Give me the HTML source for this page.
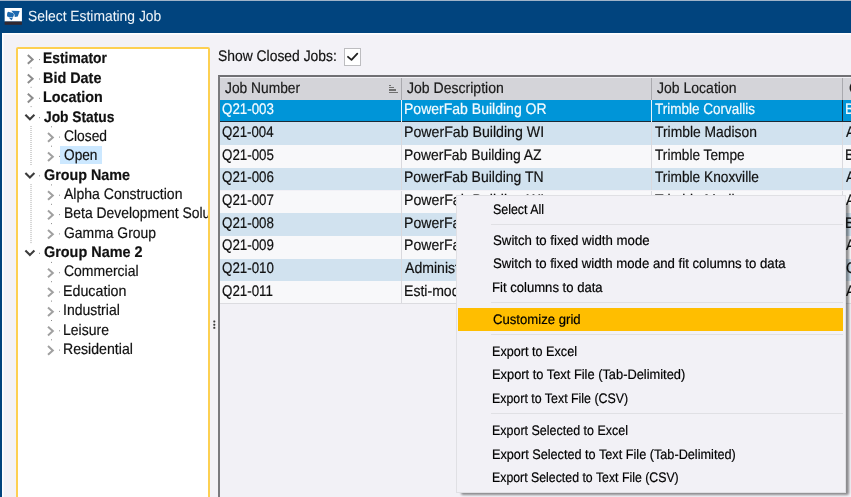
<!DOCTYPE html>
<html><head><meta charset="utf-8"><style>
html,body{margin:0;padding:0;width:851px;height:497px;overflow:hidden;background:#f3f2f7;font-family:'Liberation Sans', sans-serif}
</style></head><body>
<div style="position:absolute;left:0;top:0;width:851px;height:33px;background:#01447e"></div>
<div style="position:absolute;left:0;top:0;width:851px;height:1px;background:#9fb3c8"></div>
<div style="position:absolute;left:0;top:33px;width:2px;height:464px;background:#01447e"></div>
<div style="position:absolute;left:2px;top:33px;width:849px;height:2px;background:#f9f9fc;border-top:1px solid #fff;box-sizing:border-box"></div>
<div style="position:absolute;left:2px;top:33px;width:2px;height:464px;background:#f9f9fc;border-left:1px solid #fff;box-sizing:border-box"></div>
<svg style="position:absolute;left:2px;top:6px" width="22" height="22" viewBox="0 0 497 497">
<rect x="60" y="45" width="390" height="305" fill="#ffffff"/>
<rect x="60" y="352" width="390" height="72" fill="#33282f"/>
<path d="M138 128 L248 158 L272 200 L246 262 L150 250 L112 232 L118 160 Z" fill="#1d6ab0"/>
<path d="M148 262 L246 274 L216 324 Z" fill="#1d6ab0"/>
<path d="M212 110 L400 114 L356 240 L288 246 L282 192 Z" fill="#1d6ab0"/>
</svg>
<div style="position:absolute;white-space:nowrap;left:218.00px;top:47px;font:normal 15.3px/20px 'Liberation Sans', sans-serif;color:#111;-webkit-text-stroke:0.2px #111;transform:scaleX(0.9075);transform-origin:0 0;text-rendering:geometricPrecision;">Show Closed Jobs:</div><div style="position:absolute;white-space:nowrap;left:27.60px;top:7px;font:normal 14.8px/20px 'Liberation Sans', sans-serif;color:#eef3f8;-webkit-text-stroke:0.2px #eef3f8;transform:scaleX(0.9363);transform-origin:0 0;text-rendering:geometricPrecision;-webkit-text-stroke:0.05px #eef3f8">Select Estimating Job</div>
<div style="position:absolute;left:16px;top:47px;width:194px;height:460px;border:2px solid #fdd052;border-radius:2px;background:#fff;box-sizing:border-box"></div>
<div style="position:absolute;left:18px;top:49px;width:190px;height:448px;overflow:hidden">
<div style="position:absolute;left:-18px;top:-49px;width:851px;height:497px">
<div style="position:absolute;left:59.80px;top:145.60px;width:41.90px;height:18.60px;background:#cce8ff;"></div><div style="position:absolute;white-space:nowrap;left:42.79px;top:49px;font:bold 15.3px/20px 'Liberation Sans', sans-serif;color:#111;-webkit-text-stroke:0.2px #111;transform:scaleX(0.9052);transform-origin:0 0;text-rendering:geometricPrecision;">Estimator</div><div style="position:absolute;white-space:nowrap;left:42.76px;top:69px;font:bold 15.3px/20px 'Liberation Sans', sans-serif;color:#111;-webkit-text-stroke:0.2px #111;transform:scaleX(0.9415);transform-origin:0 0;text-rendering:geometricPrecision;">Bid Date</div><div style="position:absolute;white-space:nowrap;left:42.76px;top:88px;font:bold 15.3px/20px 'Liberation Sans', sans-serif;color:#111;-webkit-text-stroke:0.2px #111;transform:scaleX(0.9360);transform-origin:0 0;text-rendering:geometricPrecision;">Location</div><div style="position:absolute;white-space:nowrap;left:43.70px;top:108px;font:bold 15.3px/20px 'Liberation Sans', sans-serif;color:#111;-webkit-text-stroke:0.2px #111;transform:scaleX(0.9010);transform-origin:0 0;text-rendering:geometricPrecision;">Job Status</div><div style="position:absolute;white-space:nowrap;left:64.40px;top:127px;font:normal 15.3px/20px 'Liberation Sans', sans-serif;color:#111;-webkit-text-stroke:0.2px #111;transform:scaleX(0.9043);transform-origin:0 0;text-rendering:geometricPrecision;">Closed</div><div style="position:absolute;white-space:nowrap;left:64.40px;top:146px;font:normal 15.3px/20px 'Liberation Sans', sans-serif;color:#111;-webkit-text-stroke:0.2px #111;transform:scaleX(0.8940);transform-origin:0 0;text-rendering:geometricPrecision;">Open</div><div style="position:absolute;white-space:nowrap;left:43.70px;top:166px;font:bold 15.3px/20px 'Liberation Sans', sans-serif;color:#111;-webkit-text-stroke:0.2px #111;transform:scaleX(0.9355);transform-origin:0 0;text-rendering:geometricPrecision;">Group Name</div><div style="position:absolute;white-space:nowrap;left:64.40px;top:185px;font:normal 15.3px/20px 'Liberation Sans', sans-serif;color:#111;-webkit-text-stroke:0.2px #111;transform:scaleX(0.9166);transform-origin:0 0;text-rendering:geometricPrecision;">Alpha Construction</div><div style="position:absolute;white-space:nowrap;left:64.29px;top:204px;font:normal 15.3px/20px 'Liberation Sans', sans-serif;color:#111;-webkit-text-stroke:0.2px #111;transform:scaleX(0.9100);transform-origin:0 0;text-rendering:geometricPrecision;">Beta Development Solutions</div><div style="position:absolute;white-space:nowrap;left:64.40px;top:224px;font:normal 15.3px/20px 'Liberation Sans', sans-serif;color:#111;-webkit-text-stroke:0.2px #111;transform:scaleX(0.9100);transform-origin:0 0;text-rendering:geometricPrecision;">Gamma Group</div><div style="position:absolute;white-space:nowrap;left:43.70px;top:243px;font:bold 15.3px/20px 'Liberation Sans', sans-serif;color:#111;-webkit-text-stroke:0.2px #111;transform:scaleX(0.9419);transform-origin:0 0;text-rendering:geometricPrecision;">Group Name 2</div><div style="position:absolute;white-space:nowrap;left:64.40px;top:262px;font:normal 15.3px/20px 'Liberation Sans', sans-serif;color:#111;-webkit-text-stroke:0.2px #111;transform:scaleX(0.9139);transform-origin:0 0;text-rendering:geometricPrecision;">Commercial</div><div style="position:absolute;white-space:nowrap;left:63.47px;top:282px;font:normal 15.3px/20px 'Liberation Sans', sans-serif;color:#111;-webkit-text-stroke:0.2px #111;transform:scaleX(0.9319);transform-origin:0 0;text-rendering:geometricPrecision;">Education</div><div style="position:absolute;white-space:nowrap;left:63.49px;top:301px;font:normal 15.3px/20px 'Liberation Sans', sans-serif;color:#111;-webkit-text-stroke:0.2px #111;transform:scaleX(0.9148);transform-origin:0 0;text-rendering:geometricPrecision;">Industrial</div><div style="position:absolute;white-space:nowrap;left:63.48px;top:321px;font:normal 15.3px/20px 'Liberation Sans', sans-serif;color:#111;-webkit-text-stroke:0.2px #111;transform:scaleX(0.9165);transform-origin:0 0;text-rendering:geometricPrecision;">Leisure</div><div style="position:absolute;white-space:nowrap;left:63.48px;top:340px;font:normal 15.3px/20px 'Liberation Sans', sans-serif;color:#111;-webkit-text-stroke:0.2px #111;transform:scaleX(0.9235);transform-origin:0 0;text-rendering:geometricPrecision;">Residential</div>
<svg style="position:absolute;left:0;top:0" width="851" height="497"><path d="M27.8 55.1 L32.6 59.4 L27.8 63.7" fill="none" stroke="#8c8c8c" stroke-width="2"/><rect x="39.0" y="59.1" width="1" height="1" fill="#8a8a8a"/><rect x="30.6" y="67.4" width="1" height="1" fill="#9a9a9a"/><path d="M27.8 74.5 L32.6 78.8 L27.8 83.1" fill="none" stroke="#8c8c8c" stroke-width="2"/><rect x="39.0" y="78.5" width="1" height="1" fill="#8a8a8a"/><rect x="30.6" y="86.8" width="1" height="1" fill="#9a9a9a"/><path d="M27.8 93.8 L32.6 98.1 L27.8 102.4" fill="none" stroke="#8c8c8c" stroke-width="2"/><rect x="39.0" y="97.8" width="1" height="1" fill="#8a8a8a"/><rect x="30.6" y="106.1" width="1" height="1" fill="#9a9a9a"/><path d="M25.4 114.8 L29.9 119.3 L34.4 114.8" fill="none" stroke="#3c3c3c" stroke-width="2.1"/><rect x="39.0" y="117.2" width="1" height="1" fill="#8a8a8a"/><path d="M48.0 133.1 L52.8 137.4 L48.0 141.7" fill="none" stroke="#a0a0a0" stroke-width="2"/><rect x="59.0" y="136.6" width="1" height="1" fill="#8a8a8a"/><rect x="51" y="126.3" width="1" height="1" fill="#8a8a8a"/><path d="M48.0 152.4 L52.8 156.8 L48.0 161.1" fill="none" stroke="#a0a0a0" stroke-width="2"/><rect x="59.0" y="155.9" width="1" height="1" fill="#8a8a8a"/><rect x="51" y="145.7" width="1" height="1" fill="#8a8a8a"/><path d="M25.4 172.9 L29.9 177.4 L34.4 172.9" fill="none" stroke="#3c3c3c" stroke-width="2.1"/><rect x="39.0" y="175.3" width="1" height="1" fill="#8a8a8a"/><path d="M48.0 191.2 L52.8 195.5 L48.0 199.8" fill="none" stroke="#a0a0a0" stroke-width="2"/><rect x="59.0" y="194.7" width="1" height="1" fill="#8a8a8a"/><rect x="51" y="184.4" width="1" height="1" fill="#8a8a8a"/><path d="M48.0 210.6 L52.8 214.9 L48.0 219.2" fill="none" stroke="#a0a0a0" stroke-width="2"/><rect x="59.0" y="214.1" width="1" height="1" fill="#8a8a8a"/><rect x="51" y="203.8" width="1" height="1" fill="#8a8a8a"/><path d="M48.0 229.9 L52.8 234.2 L48.0 238.5" fill="none" stroke="#a0a0a0" stroke-width="2"/><rect x="59.0" y="233.4" width="1" height="1" fill="#8a8a8a"/><rect x="51" y="223.1" width="1" height="1" fill="#8a8a8a"/><path d="M25.4 250.4 L29.9 254.9 L34.4 250.4" fill="none" stroke="#3c3c3c" stroke-width="2.1"/><rect x="39.0" y="252.8" width="1" height="1" fill="#8a8a8a"/><path d="M48.0 268.7 L52.8 273.0 L48.0 277.3" fill="none" stroke="#a0a0a0" stroke-width="2"/><rect x="59.0" y="272.2" width="1" height="1" fill="#8a8a8a"/><rect x="51" y="261.9" width="1" height="1" fill="#8a8a8a"/><path d="M48.0 288.0 L52.8 292.3 L48.0 296.6" fill="none" stroke="#a0a0a0" stroke-width="2"/><rect x="59.0" y="291.5" width="1" height="1" fill="#8a8a8a"/><rect x="51" y="281.2" width="1" height="1" fill="#8a8a8a"/><path d="M48.0 307.4 L52.8 311.7 L48.0 316.0" fill="none" stroke="#a0a0a0" stroke-width="2"/><rect x="59.0" y="310.9" width="1" height="1" fill="#8a8a8a"/><rect x="51" y="300.6" width="1" height="1" fill="#8a8a8a"/><path d="M48.0 326.8 L52.8 331.1 L48.0 335.4" fill="none" stroke="#a0a0a0" stroke-width="2"/><rect x="59.0" y="330.3" width="1" height="1" fill="#8a8a8a"/><rect x="51" y="320.0" width="1" height="1" fill="#8a8a8a"/><path d="M48.0 346.1 L52.8 350.4 L48.0 354.8" fill="none" stroke="#a0a0a0" stroke-width="2"/><rect x="59.0" y="349.6" width="1" height="1" fill="#8a8a8a"/><rect x="51" y="339.3" width="1" height="1" fill="#8a8a8a"/><line x1="31" y1="126.0" x2="31" y2="165.9" stroke="#a8a8a8" stroke-width="1" stroke-dasharray="1 1"/><line x1="31" y1="184.1" x2="31" y2="243.4" stroke="#a8a8a8" stroke-width="1" stroke-dasharray="1 1"/></svg>
</div></div>
<div style="position:absolute;left:344px;top:48.4px;width:17px;height:17.2px;border:1px solid #bdbdc0;background:#fff;box-sizing:border-box"></div>
<svg style="position:absolute;left:0;top:0" width="851" height="497"><path d="M348 56.8 L351.5 59.9 L357.3 53.6" fill="none" stroke="#222" stroke-width="1.8" stroke-linecap="round" stroke-linejoin="round"/></svg>
<div style="position:absolute;left:0;top:0;width:851px;height:497px;overflow:hidden">
<div style="position:absolute;left:218.00px;top:75.00px;width:700.00px;height:500.00px;background:#f2f1f6;border-left:2px solid #7a7a7e;border-top:2.5px solid #707074;box-sizing:border-box"></div><div style="position:absolute;left:220.00px;top:77.50px;width:700.00px;height:22.20px;background:#d4d4d9;"></div><div style="position:absolute;left:401.00px;top:77.50px;width:1.00px;height:22.20px;background:#a9a9ae;"></div><div style="position:absolute;left:651.00px;top:77.50px;width:1.00px;height:22.20px;background:#a9a9ae;"></div><div style="position:absolute;left:841.80px;top:77.50px;width:1.00px;height:22.20px;background:#a9a9ae;"></div><div style="position:absolute;left:220.00px;top:99.70px;width:700.00px;height:22.70px;background:#0095d8;"></div><div style="position:absolute;left:220.00px;top:120.50px;width:700.00px;height:1.90px;background:#1b2a36;"></div><div style="position:absolute;left:401.00px;top:99.70px;width:1.00px;height:22.70px;background:#e6f3fb;"></div><div style="position:absolute;left:651.00px;top:99.70px;width:1.00px;height:22.70px;background:#e6f3fb;"></div><div style="position:absolute;left:841.80px;top:99.70px;width:1.00px;height:22.70px;background:#1b2a36;"></div><div style="position:absolute;left:220.00px;top:122.40px;width:700.00px;height:22.70px;background:#d1e2ef;"></div><div style="position:absolute;left:401.00px;top:122.40px;width:1.00px;height:22.70px;background:#d9d9de;"></div><div style="position:absolute;left:651.00px;top:122.40px;width:1.00px;height:22.70px;background:#d9d9de;"></div><div style="position:absolute;left:841.80px;top:122.40px;width:1.00px;height:22.70px;background:#d9d9de;"></div><div style="position:absolute;left:220.00px;top:145.10px;width:700.00px;height:22.70px;background:#f8f8fa;"></div><div style="position:absolute;left:401.00px;top:145.10px;width:1.00px;height:22.70px;background:#d9d9de;"></div><div style="position:absolute;left:651.00px;top:145.10px;width:1.00px;height:22.70px;background:#d9d9de;"></div><div style="position:absolute;left:841.80px;top:145.10px;width:1.00px;height:22.70px;background:#d9d9de;"></div><div style="position:absolute;left:220.00px;top:167.80px;width:700.00px;height:22.70px;background:#d1e2ef;"></div><div style="position:absolute;left:401.00px;top:167.80px;width:1.00px;height:22.70px;background:#d9d9de;"></div><div style="position:absolute;left:651.00px;top:167.80px;width:1.00px;height:22.70px;background:#d9d9de;"></div><div style="position:absolute;left:841.80px;top:167.80px;width:1.00px;height:22.70px;background:#d9d9de;"></div><div style="position:absolute;left:220.00px;top:190.50px;width:700.00px;height:22.70px;background:#f8f8fa;"></div><div style="position:absolute;left:401.00px;top:190.50px;width:1.00px;height:22.70px;background:#d9d9de;"></div><div style="position:absolute;left:651.00px;top:190.50px;width:1.00px;height:22.70px;background:#d9d9de;"></div><div style="position:absolute;left:841.80px;top:190.50px;width:1.00px;height:22.70px;background:#d9d9de;"></div><div style="position:absolute;left:220.00px;top:213.20px;width:700.00px;height:22.70px;background:#d1e2ef;"></div><div style="position:absolute;left:401.00px;top:213.20px;width:1.00px;height:22.70px;background:#d9d9de;"></div><div style="position:absolute;left:651.00px;top:213.20px;width:1.00px;height:22.70px;background:#d9d9de;"></div><div style="position:absolute;left:841.80px;top:213.20px;width:1.00px;height:22.70px;background:#d9d9de;"></div><div style="position:absolute;left:220.00px;top:235.90px;width:700.00px;height:22.70px;background:#f8f8fa;"></div><div style="position:absolute;left:401.00px;top:235.90px;width:1.00px;height:22.70px;background:#d9d9de;"></div><div style="position:absolute;left:651.00px;top:235.90px;width:1.00px;height:22.70px;background:#d9d9de;"></div><div style="position:absolute;left:841.80px;top:235.90px;width:1.00px;height:22.70px;background:#d9d9de;"></div><div style="position:absolute;left:220.00px;top:258.60px;width:700.00px;height:22.70px;background:#d1e2ef;"></div><div style="position:absolute;left:401.00px;top:258.60px;width:1.00px;height:22.70px;background:#d9d9de;"></div><div style="position:absolute;left:651.00px;top:258.60px;width:1.00px;height:22.70px;background:#d9d9de;"></div><div style="position:absolute;left:841.80px;top:258.60px;width:1.00px;height:22.70px;background:#d9d9de;"></div><div style="position:absolute;left:220.00px;top:281.30px;width:700.00px;height:22.70px;background:#f8f8fa;"></div><div style="position:absolute;left:401.00px;top:281.30px;width:1.00px;height:22.70px;background:#d9d9de;"></div><div style="position:absolute;left:651.00px;top:281.30px;width:1.00px;height:22.70px;background:#d9d9de;"></div><div style="position:absolute;left:841.80px;top:281.30px;width:1.00px;height:22.70px;background:#d9d9de;"></div><div style="position:absolute;left:220.00px;top:303.00px;width:700.00px;height:1.00px;background:#dcdce0;"></div><div style="position:absolute;left:389.10px;top:85.00px;width:2.00px;height:1.30px;background:#707070;"></div><div style="position:absolute;left:389.10px;top:87.20px;width:4.70px;height:1.30px;background:#707070;"></div><div style="position:absolute;left:389.10px;top:89.40px;width:6.90px;height:1.30px;background:#707070;"></div><div style="position:absolute;left:389.10px;top:91.60px;width:9.00px;height:1.30px;background:#707070;"></div><div style="position:absolute;white-space:nowrap;left:224.50px;top:79px;font:normal 15.3px/20px 'Liberation Sans', sans-serif;color:#1a1a1a;-webkit-text-stroke:0.2px #1a1a1a;transform:scaleX(0.9012);transform-origin:0 0;text-rendering:geometricPrecision;">Job Number</div><div style="position:absolute;white-space:nowrap;left:407.20px;top:79px;font:normal 15.3px/20px 'Liberation Sans', sans-serif;color:#1a1a1a;-webkit-text-stroke:0.2px #1a1a1a;transform:scaleX(0.9178);transform-origin:0 0;text-rendering:geometricPrecision;">Job Description</div><div style="position:absolute;white-space:nowrap;left:657.10px;top:79px;font:normal 15.3px/20px 'Liberation Sans', sans-serif;color:#1a1a1a;-webkit-text-stroke:0.2px #1a1a1a;transform:scaleX(0.9161);transform-origin:0 0;text-rendering:geometricPrecision;">Job Location</div><div style="position:absolute;white-space:nowrap;left:849.00px;top:79px;font:normal 15.3px/20px 'Liberation Sans', sans-serif;color:#1a1a1a;-webkit-text-stroke:0.2px #1a1a1a;transform:scaleX(0.9000);transform-origin:0 0;text-rendering:geometricPrecision;">Customer</div><div style="position:absolute;white-space:nowrap;left:222.00px;top:100px;font:normal 15.3px/20px 'Liberation Sans', sans-serif;color:#f4fbff;-webkit-text-stroke:0.2px #f4fbff;transform:scaleX(0.8730);transform-origin:0 0;text-rendering:geometricPrecision;">Q21-003</div><div style="position:absolute;white-space:nowrap;left:403.78px;top:100px;font:normal 15.3px/20px 'Liberation Sans', sans-serif;color:#f4fbff;-webkit-text-stroke:0.2px #f4fbff;transform:scaleX(0.9169);transform-origin:0 0;text-rendering:geometricPrecision;">PowerFab Building OR</div><div style="position:absolute;white-space:nowrap;left:655.10px;top:100px;font:normal 15.3px/20px 'Liberation Sans', sans-serif;color:#f4fbff;-webkit-text-stroke:0.2px #f4fbff;transform:scaleX(0.8823);transform-origin:0 0;text-rendering:geometricPrecision;">Trimble Corvallis</div><div style="position:absolute;white-space:nowrap;left:844.90px;top:100px;font:normal 15.3px/20px 'Liberation Sans', sans-serif;color:#f4fbff;-webkit-text-stroke:0.2px #f4fbff;transform:scaleX(0.9000);transform-origin:0 0;text-rendering:geometricPrecision;">B</div><div style="position:absolute;white-space:nowrap;left:222.00px;top:123px;font:normal 15.3px/20px 'Liberation Sans', sans-serif;color:#111;-webkit-text-stroke:0.2px #111;transform:scaleX(0.8663);transform-origin:0 0;text-rendering:geometricPrecision;">Q21-004</div><div style="position:absolute;white-space:nowrap;left:403.77px;top:123px;font:normal 15.3px/20px 'Liberation Sans', sans-serif;color:#111;-webkit-text-stroke:0.2px #111;transform:scaleX(0.9257);transform-origin:0 0;text-rendering:geometricPrecision;">PowerFab Building WI</div><div style="position:absolute;white-space:nowrap;left:655.10px;top:123px;font:normal 15.3px/20px 'Liberation Sans', sans-serif;color:#111;-webkit-text-stroke:0.2px #111;transform:scaleX(0.9064);transform-origin:0 0;text-rendering:geometricPrecision;">Trimble Madison</div><div style="position:absolute;white-space:nowrap;left:845.80px;top:123px;font:normal 15.3px/20px 'Liberation Sans', sans-serif;color:#111;-webkit-text-stroke:0.2px #111;transform:scaleX(0.9000);transform-origin:0 0;text-rendering:geometricPrecision;">A</div><div style="position:absolute;white-space:nowrap;left:222.00px;top:146px;font:normal 15.3px/20px 'Liberation Sans', sans-serif;color:#111;-webkit-text-stroke:0.2px #111;transform:scaleX(0.8730);transform-origin:0 0;text-rendering:geometricPrecision;">Q21-005</div><div style="position:absolute;white-space:nowrap;left:403.79px;top:146px;font:normal 15.3px/20px 'Liberation Sans', sans-serif;color:#111;-webkit-text-stroke:0.2px #111;transform:scaleX(0.9082);transform-origin:0 0;text-rendering:geometricPrecision;">PowerFab Building AZ</div><div style="position:absolute;white-space:nowrap;left:655.10px;top:146px;font:normal 15.3px/20px 'Liberation Sans', sans-serif;color:#111;-webkit-text-stroke:0.2px #111;transform:scaleX(0.8933);transform-origin:0 0;text-rendering:geometricPrecision;">Trimble Tempe</div><div style="position:absolute;white-space:nowrap;left:844.90px;top:146px;font:normal 15.3px/20px 'Liberation Sans', sans-serif;color:#111;-webkit-text-stroke:0.2px #111;transform:scaleX(0.9000);transform-origin:0 0;text-rendering:geometricPrecision;">B</div><div style="position:absolute;white-space:nowrap;left:222.00px;top:168px;font:normal 15.3px/20px 'Liberation Sans', sans-serif;color:#111;-webkit-text-stroke:0.2px #111;transform:scaleX(0.8730);transform-origin:0 0;text-rendering:geometricPrecision;">Q21-006</div><div style="position:absolute;white-space:nowrap;left:403.79px;top:168px;font:normal 15.3px/20px 'Liberation Sans', sans-serif;color:#111;-webkit-text-stroke:0.2px #111;transform:scaleX(0.9140);transform-origin:0 0;text-rendering:geometricPrecision;">PowerFab Building TN</div><div style="position:absolute;white-space:nowrap;left:655.10px;top:168px;font:normal 15.3px/20px 'Liberation Sans', sans-serif;color:#111;-webkit-text-stroke:0.2px #111;transform:scaleX(0.8961);transform-origin:0 0;text-rendering:geometricPrecision;">Trimble Knoxville</div><div style="position:absolute;white-space:nowrap;left:845.80px;top:168px;font:normal 15.3px/20px 'Liberation Sans', sans-serif;color:#111;-webkit-text-stroke:0.2px #111;transform:scaleX(0.9000);transform-origin:0 0;text-rendering:geometricPrecision;">A</div><div style="position:absolute;white-space:nowrap;left:222.00px;top:191px;font:normal 15.3px/20px 'Liberation Sans', sans-serif;color:#111;-webkit-text-stroke:0.2px #111;transform:scaleX(0.8730);transform-origin:0 0;text-rendering:geometricPrecision;">Q21-007</div><div style="position:absolute;white-space:nowrap;left:403.77px;top:191px;font:normal 15.3px/20px 'Liberation Sans', sans-serif;color:#111;-webkit-text-stroke:0.2px #111;transform:scaleX(0.9257);transform-origin:0 0;text-rendering:geometricPrecision;">PowerFab Building WI</div><div style="position:absolute;white-space:nowrap;left:655.10px;top:191px;font:normal 15.3px/20px 'Liberation Sans', sans-serif;color:#111;-webkit-text-stroke:0.2px #111;transform:scaleX(0.9064);transform-origin:0 0;text-rendering:geometricPrecision;">Trimble Madison</div><div style="position:absolute;white-space:nowrap;left:845.80px;top:191px;font:normal 15.3px/20px 'Liberation Sans', sans-serif;color:#111;-webkit-text-stroke:0.2px #111;transform:scaleX(0.9000);transform-origin:0 0;text-rendering:geometricPrecision;">A</div><div style="position:absolute;white-space:nowrap;left:222.00px;top:214px;font:normal 15.3px/20px 'Liberation Sans', sans-serif;color:#111;-webkit-text-stroke:0.2px #111;transform:scaleX(0.8730);transform-origin:0 0;text-rendering:geometricPrecision;">Q21-008</div><div style="position:absolute;white-space:nowrap;left:403.78px;top:214px;font:normal 15.3px/20px 'Liberation Sans', sans-serif;color:#111;-webkit-text-stroke:0.2px #111;transform:scaleX(0.9200);transform-origin:0 0;text-rendering:geometricPrecision;">PowerFab Building CO</div><div style="position:absolute;white-space:nowrap;left:655.10px;top:214px;font:normal 15.3px/20px 'Liberation Sans', sans-serif;color:#111;-webkit-text-stroke:0.2px #111;transform:scaleX(0.8930);transform-origin:0 0;text-rendering:geometricPrecision;">Trimble Boulder</div><div style="position:absolute;white-space:nowrap;left:844.90px;top:214px;font:normal 15.3px/20px 'Liberation Sans', sans-serif;color:#111;-webkit-text-stroke:0.2px #111;transform:scaleX(0.9000);transform-origin:0 0;text-rendering:geometricPrecision;">B</div><div style="position:absolute;white-space:nowrap;left:222.00px;top:236px;font:normal 15.3px/20px 'Liberation Sans', sans-serif;color:#111;-webkit-text-stroke:0.2px #111;transform:scaleX(0.8730);transform-origin:0 0;text-rendering:geometricPrecision;">Q21-009</div><div style="position:absolute;white-space:nowrap;left:403.78px;top:236px;font:normal 15.3px/20px 'Liberation Sans', sans-serif;color:#111;-webkit-text-stroke:0.2px #111;transform:scaleX(0.9200);transform-origin:0 0;text-rendering:geometricPrecision;">PowerFab Building MN</div><div style="position:absolute;white-space:nowrap;left:655.10px;top:236px;font:normal 15.3px/20px 'Liberation Sans', sans-serif;color:#111;-webkit-text-stroke:0.2px #111;transform:scaleX(0.8930);transform-origin:0 0;text-rendering:geometricPrecision;">Trimble Minneapolis</div><div style="position:absolute;white-space:nowrap;left:845.80px;top:236px;font:normal 15.3px/20px 'Liberation Sans', sans-serif;color:#111;-webkit-text-stroke:0.2px #111;transform:scaleX(0.9000);transform-origin:0 0;text-rendering:geometricPrecision;">A</div><div style="position:absolute;white-space:nowrap;left:222.00px;top:259px;font:normal 15.3px/20px 'Liberation Sans', sans-serif;color:#111;-webkit-text-stroke:0.2px #111;transform:scaleX(0.8730);transform-origin:0 0;text-rendering:geometricPrecision;">Q21-010</div><div style="position:absolute;white-space:nowrap;left:404.70px;top:259px;font:normal 15.3px/20px 'Liberation Sans', sans-serif;color:#111;-webkit-text-stroke:0.2px #111;transform:scaleX(0.9200);transform-origin:0 0;text-rendering:geometricPrecision;">Administration</div><div style="position:absolute;white-space:nowrap;left:655.10px;top:259px;font:normal 15.3px/20px 'Liberation Sans', sans-serif;color:#111;-webkit-text-stroke:0.2px #111;transform:scaleX(0.8930);transform-origin:0 0;text-rendering:geometricPrecision;">Trimble Corvallis</div><div style="position:absolute;white-space:nowrap;left:845.80px;top:259px;font:normal 15.3px/20px 'Liberation Sans', sans-serif;color:#111;-webkit-text-stroke:0.2px #111;transform:scaleX(0.9000);transform-origin:0 0;text-rendering:geometricPrecision;">C</div><div style="position:absolute;white-space:nowrap;left:222.00px;top:282px;font:normal 15.3px/20px 'Liberation Sans', sans-serif;color:#111;-webkit-text-stroke:0.2px #111;transform:scaleX(0.8730);transform-origin:0 0;text-rendering:geometricPrecision;">Q21-011</div><div style="position:absolute;white-space:nowrap;left:403.78px;top:282px;font:normal 15.3px/20px 'Liberation Sans', sans-serif;color:#111;-webkit-text-stroke:0.2px #111;transform:scaleX(0.9200);transform-origin:0 0;text-rendering:geometricPrecision;">Esti-mod Project</div><div style="position:absolute;white-space:nowrap;left:655.10px;top:282px;font:normal 15.3px/20px 'Liberation Sans', sans-serif;color:#111;-webkit-text-stroke:0.2px #111;transform:scaleX(0.8930);transform-origin:0 0;text-rendering:geometricPrecision;">Trimble Madison</div><div style="position:absolute;white-space:nowrap;left:845.80px;top:282px;font:normal 15.3px/20px 'Liberation Sans', sans-serif;color:#111;-webkit-text-stroke:0.2px #111;transform:scaleX(0.9000);transform-origin:0 0;text-rendering:geometricPrecision;">A</div>
</div>
<svg style="position:absolute;left:0;top:0" width="851" height="497">
<rect x="213.3" y="320.4" width="2" height="2" rx="0.6" fill="#3a3a3a"/><rect x="213.3" y="323.7" width="2" height="2" rx="0.6" fill="#3a3a3a"/><rect x="213.3" y="326.8" width="2" height="2" rx="0.6" fill="#3a3a3a"/>
</svg>
<div style="position:absolute;left:461.00px;top:203.00px;width:387.50px;height:291.50px;background:rgba(0,0,0,0.42);filter:blur(1.3px);border-radius:2px"></div><div style="position:absolute;left:456.00px;top:194.50px;width:390.00px;height:298.00px;background:#f2f1f6;border:1px solid #e0e0e4;box-sizing:border-box"></div><div style="position:absolute;left:458.00px;top:307.90px;width:384.80px;height:23.40px;background:#ffbe00;"></div><div style="position:absolute;left:491.00px;top:223.90px;width:352.00px;height:1.00px;background:#e0e0e4;"></div><div style="position:absolute;left:491.00px;top:302.40px;width:352.00px;height:1.00px;background:#e0e0e4;"></div><div style="position:absolute;left:491.00px;top:333.80px;width:352.00px;height:1.00px;background:#e0e0e4;"></div><div style="position:absolute;left:491.00px;top:412.90px;width:352.00px;height:1.00px;background:#e0e0e4;"></div><div style="position:absolute;white-space:nowrap;left:492.50px;top:200px;font:normal 13.8px/20px 'Liberation Sans', sans-serif;color:#000;-webkit-text-stroke:0.2px #000;transform:scaleX(0.9000);transform-origin:0 0;text-rendering:geometricPrecision;">Select All</div><div style="position:absolute;white-space:nowrap;left:492.50px;top:231px;font:normal 13.8px/20px 'Liberation Sans', sans-serif;color:#000;-webkit-text-stroke:0.2px #000;transform:scaleX(0.9593);transform-origin:0 0;text-rendering:geometricPrecision;">Switch to fixed width mode</div><div style="position:absolute;white-space:nowrap;left:492.50px;top:254px;font:normal 13.8px/20px 'Liberation Sans', sans-serif;color:#000;-webkit-text-stroke:0.2px #000;transform:scaleX(0.9565);transform-origin:0 0;text-rendering:geometricPrecision;">Switch to fixed width mode and fit columns to data</div><div style="position:absolute;white-space:nowrap;left:491.55px;top:278px;font:normal 13.8px/20px 'Liberation Sans', sans-serif;color:#000;-webkit-text-stroke:0.2px #000;transform:scaleX(0.9492);transform-origin:0 0;text-rendering:geometricPrecision;">Fit columns to data</div><div style="position:absolute;white-space:nowrap;left:492.50px;top:310px;font:normal 13.8px/20px 'Liberation Sans', sans-serif;color:#000;-webkit-text-stroke:0.2px #000;transform:scaleX(0.9525);transform-origin:0 0;text-rendering:geometricPrecision;">Customize grid</div><div style="position:absolute;white-space:nowrap;left:491.58px;top:342px;font:normal 13.8px/20px 'Liberation Sans', sans-serif;color:#000;-webkit-text-stroke:0.2px #000;transform:scaleX(0.9158);transform-origin:0 0;text-rendering:geometricPrecision;">Export to Excel</div><div style="position:absolute;white-space:nowrap;left:491.57px;top:365px;font:normal 13.8px/20px 'Liberation Sans', sans-serif;color:#000;-webkit-text-stroke:0.2px #000;transform:scaleX(0.9312);transform-origin:0 0;text-rendering:geometricPrecision;">Export to Text File (Tab-Delimited)</div><div style="position:absolute;white-space:nowrap;left:491.60px;top:389px;font:normal 13.8px/20px 'Liberation Sans', sans-serif;color:#000;-webkit-text-stroke:0.2px #000;transform:scaleX(0.8987);transform-origin:0 0;text-rendering:geometricPrecision;">Export to Text File (CSV)</div><div style="position:absolute;white-space:nowrap;left:491.60px;top:421px;font:normal 13.8px/20px 'Liberation Sans', sans-serif;color:#000;-webkit-text-stroke:0.2px #000;transform:scaleX(0.9046);transform-origin:0 0;text-rendering:geometricPrecision;">Export Selected to Excel</div><div style="position:absolute;white-space:nowrap;left:491.58px;top:445px;font:normal 13.8px/20px 'Liberation Sans', sans-serif;color:#000;-webkit-text-stroke:0.2px #000;transform:scaleX(0.9196);transform-origin:0 0;text-rendering:geometricPrecision;">Export Selected to Text File (Tab-Delimited)</div><div style="position:absolute;white-space:nowrap;left:491.61px;top:468px;font:normal 13.8px/20px 'Liberation Sans', sans-serif;color:#000;-webkit-text-stroke:0.2px #000;transform:scaleX(0.8930);transform-origin:0 0;text-rendering:geometricPrecision;">Export Selected to Text File (CSV)</div>
</body></html>
